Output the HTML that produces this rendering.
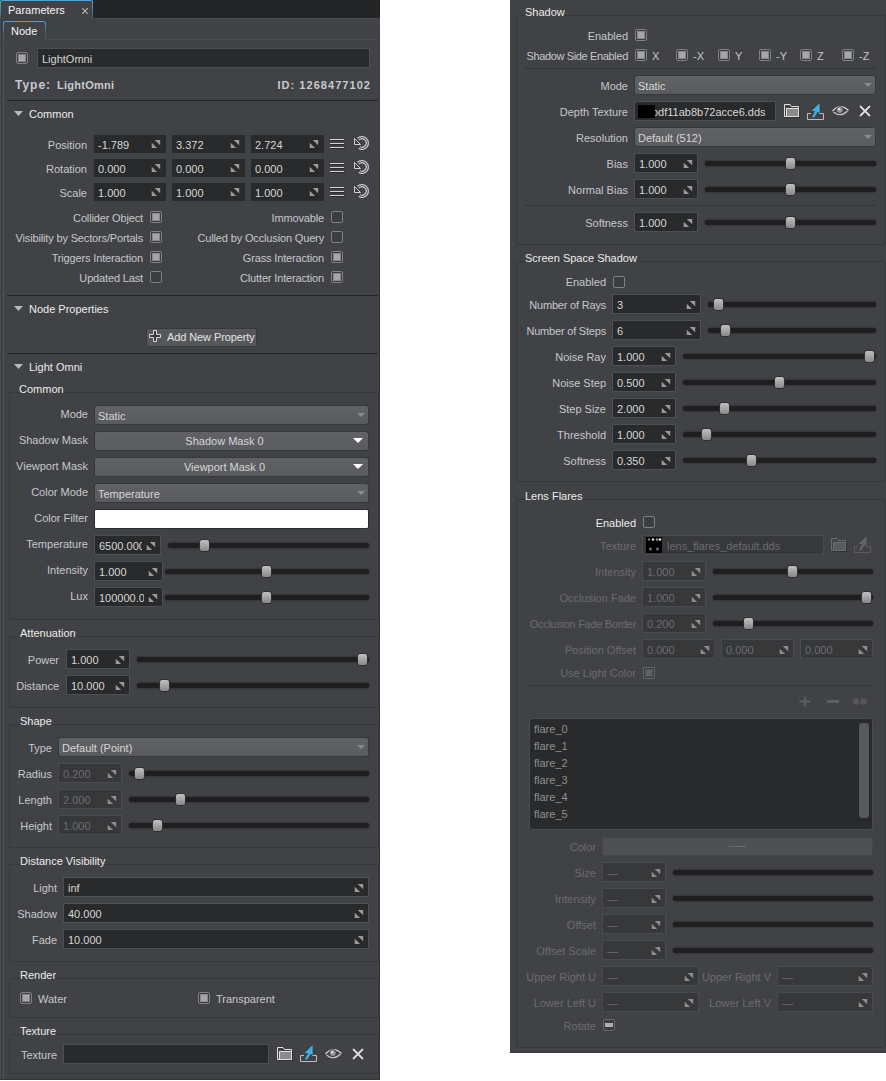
<!DOCTYPE html>
<html><head><meta charset="utf-8"><style>
html,body{margin:0;padding:0;background:#fff;width:886px;height:1081px;overflow:hidden}
.b{position:absolute}
.t{position:absolute;font-family:"Liberation Sans",sans-serif;font-size:11px;line-height:13px;white-space:nowrap}
.r{text-align:right}
svg{display:block}
</style></head><body>
<div class="b" style="left:0px;top:0px;width:380px;height:1080px;background:#414246"></div>
<div class="b" style="left:93px;top:0px;width:287px;height:18px;background:#242526"></div>
<div class="b" style="left:92px;top:18px;width:288px;height:1px;background:#4a4b4f"></div>
<div class="b" style="left:0px;top:18px;width:1px;height:1062px;background:#4b4c50"></div>
<div class="b" style="left:1px;top:18px;width:1px;height:1062px;background:#37383b"></div>
<div class="b" style="left:3px;top:40px;width:1px;height:1040px;background:#505155"></div>
<div class="b" style="left:379px;top:18px;width:1px;height:1062px;background:linear-gradient(rgba(51,52,55,0.2),#333437 25%)"></div>
<div class="b" style="left:0px;top:1079px;width:380px;height:1px;background:#333437"></div>
<div class="b" style="left:0px;top:0px;width:93px;height:20px;background:#414246;border-radius:3px 3px 0 0;border-top:1px solid #4aa6e0"></div>
<div class="b" style="left:0px;top:1px;width:1px;height:18px;background:linear-gradient(#4aa6e0,#45606f)"></div>
<div class="b" style="left:92px;top:1px;width:1px;height:18px;background:linear-gradient(#4aa6e0,#4a5a64)"></div>
<div class="t" style="left:8px;top:4px;color:#f4f4f4;">Parameters</div>
<svg class="b" style="left:82px;top:8px" width="6" height="6"><path d="M0 0L6 6M6 0L0 6" stroke="#b4b4b4" stroke-width="1.2"/></svg>
<div class="b" style="left:3px;top:21px;width:43px;height:20px;background:#414246;border-radius:3px 3px 0 0;border-top:1px solid #4aa6e0"></div>
<div class="b" style="left:3px;top:22px;width:1px;height:18px;background:linear-gradient(#4aa6e0,#466271 60%,#505155)"></div>
<div class="b" style="left:45px;top:22px;width:1px;height:17px;background:linear-gradient(#4aa6e0,#466271 60%,#4c4d51)"></div>
<div class="t" style="left:11px;top:25px;color:#f4f4f4;">Node</div>
<div class="b" style="left:45px;top:39px;width:333px;height:1px;background:#4c4d51"></div>
<div class="b" style="left:16px;top:52px;width:12px;height:12px;border:1px solid #808184;border-radius:2px;box-sizing:border-box;background:#3c3d40"></div>
<div class="b" style="left:18px;top:54px;width:8px;height:8px;background:#a6a6a8;box-shadow:inset 0 0 0 1px #88888a"></div>
<div class="b" style="left:37px;top:48px;width:333px;height:20px;background:#292a2b;border:1px solid #4e4f53;box-sizing:border-box"></div>
<div class="t" style="left:42px;top:53px;color:#d6d6d6;">LightOmni</div>
<div class="t" style="left:15px;top:79px;color:#c8c9cd;font-weight:bold;font-size:12px;letter-spacing:1px">Type:</div>
<div class="t" style="left:57px;top:79px;color:#c8c9cd;font-weight:bold;letter-spacing:0.25px">LightOmni</div>
<div class="t r" style="left:71px;width:300px;top:79px;color:#c8c9cd;font-weight:bold;letter-spacing:1.05px">ID: 1268477102</div>
<div class="b" style="left:7px;top:100px;width:371px;height:1px;background:#242528"></div>
<svg class="b" style="left:14px;top:111px" width="9" height="5"><path d="M0 0H9L4.5 5Z" fill="#b9bac0"/></svg>
<div class="t" style="left:29px;top:108px;color:#ececec;">Common</div>
<div class="t r" style="left:-213px;width:300px;top:139px;color:#c6c7cb;">Position</div>
<div class="b" style="left:94px;top:135px;width:72px;height:18px;background:#292a2b;"></div>
<div class="b" style="left:98px;top:139px;width:48px;height:13px;overflow:hidden"><div class="t" style="left:0;top:0;color:#d6d6d6">-1.789</div></div>
<div class="b" style="left:151px;top:140px"><svg class="dg" width="10" height="9" viewBox="0 0 10 9"><path d="M3.7 0H9.2V5.2Z M0.7 2.8V8.1H6.1Z" fill="#9a9a9a"/></svg></div>
<div class="b" style="left:172px;top:135px;width:73px;height:18px;background:#292a2b;"></div>
<div class="b" style="left:176px;top:139px;width:49px;height:13px;overflow:hidden"><div class="t" style="left:0;top:0;color:#d6d6d6">3.372</div></div>
<div class="b" style="left:230px;top:140px"><svg class="dg" width="10" height="9" viewBox="0 0 10 9"><path d="M3.7 0H9.2V5.2Z M0.7 2.8V8.1H6.1Z" fill="#9a9a9a"/></svg></div>
<div class="b" style="left:251px;top:135px;width:73px;height:18px;background:#292a2b;"></div>
<div class="b" style="left:255px;top:139px;width:49px;height:13px;overflow:hidden"><div class="t" style="left:0;top:0;color:#d6d6d6">2.724</div></div>
<div class="b" style="left:309px;top:140px"><svg class="dg" width="10" height="9" viewBox="0 0 10 9"><path d="M3.7 0H9.2V5.2Z M0.7 2.8V8.1H6.1Z" fill="#9a9a9a"/></svg></div>
<div class="b" style="left:330px;top:139px;width:14px;height:1px;background:#d2d2d2"></div>
<div class="b" style="left:331px;top:140px;width:14px;height:1px;background:#2a2b2e"></div>
<div class="b" style="left:330px;top:143px;width:14px;height:1px;background:#d2d2d2"></div>
<div class="b" style="left:331px;top:144px;width:14px;height:1px;background:#2a2b2e"></div>
<div class="b" style="left:330px;top:147px;width:14px;height:1px;background:#d2d2d2"></div>
<div class="b" style="left:331px;top:148px;width:14px;height:1px;background:#2a2b2e"></div>
<svg class="b" style="left:353px;top:135px" width="18" height="17" viewBox="0 0 18 17"><path d="M5.25 4.25A5.3 5.3 0 1 1 6.35 12.6" fill="none" stroke="#d0d0d0" stroke-width="3.4"/><path d="M5.25 4.25A5.3 5.3 0 1 1 6.35 12.6" fill="none" stroke="#45464a" stroke-width="1.1"/><path d="M1.5 3.5V9.5H7.5Z" fill="#3a3b3e" stroke="#d0d0d0" stroke-width="1"/></svg>
<div class="t r" style="left:-213px;width:300px;top:163px;color:#c6c7cb;">Rotation</div>
<div class="b" style="left:94px;top:159px;width:72px;height:18px;background:#292a2b;"></div>
<div class="b" style="left:98px;top:163px;width:48px;height:13px;overflow:hidden"><div class="t" style="left:0;top:0;color:#d6d6d6">0.000</div></div>
<div class="b" style="left:151px;top:164px"><svg class="dg" width="10" height="9" viewBox="0 0 10 9"><path d="M3.7 0H9.2V5.2Z M0.7 2.8V8.1H6.1Z" fill="#9a9a9a"/></svg></div>
<div class="b" style="left:172px;top:159px;width:73px;height:18px;background:#292a2b;"></div>
<div class="b" style="left:176px;top:163px;width:49px;height:13px;overflow:hidden"><div class="t" style="left:0;top:0;color:#d6d6d6">0.000</div></div>
<div class="b" style="left:230px;top:164px"><svg class="dg" width="10" height="9" viewBox="0 0 10 9"><path d="M3.7 0H9.2V5.2Z M0.7 2.8V8.1H6.1Z" fill="#9a9a9a"/></svg></div>
<div class="b" style="left:251px;top:159px;width:73px;height:18px;background:#292a2b;"></div>
<div class="b" style="left:255px;top:163px;width:49px;height:13px;overflow:hidden"><div class="t" style="left:0;top:0;color:#d6d6d6">0.000</div></div>
<div class="b" style="left:309px;top:164px"><svg class="dg" width="10" height="9" viewBox="0 0 10 9"><path d="M3.7 0H9.2V5.2Z M0.7 2.8V8.1H6.1Z" fill="#9a9a9a"/></svg></div>
<div class="b" style="left:330px;top:163px;width:14px;height:1px;background:#d2d2d2"></div>
<div class="b" style="left:331px;top:164px;width:14px;height:1px;background:#2a2b2e"></div>
<div class="b" style="left:330px;top:167px;width:14px;height:1px;background:#d2d2d2"></div>
<div class="b" style="left:331px;top:168px;width:14px;height:1px;background:#2a2b2e"></div>
<div class="b" style="left:330px;top:171px;width:14px;height:1px;background:#d2d2d2"></div>
<div class="b" style="left:331px;top:172px;width:14px;height:1px;background:#2a2b2e"></div>
<svg class="b" style="left:353px;top:159px" width="18" height="17" viewBox="0 0 18 17"><path d="M5.25 4.25A5.3 5.3 0 1 1 6.35 12.6" fill="none" stroke="#d0d0d0" stroke-width="3.4"/><path d="M5.25 4.25A5.3 5.3 0 1 1 6.35 12.6" fill="none" stroke="#45464a" stroke-width="1.1"/><path d="M1.5 3.5V9.5H7.5Z" fill="#3a3b3e" stroke="#d0d0d0" stroke-width="1"/></svg>
<div class="t r" style="left:-213px;width:300px;top:187px;color:#c6c7cb;">Scale</div>
<div class="b" style="left:94px;top:183px;width:72px;height:18px;background:#292a2b;"></div>
<div class="b" style="left:98px;top:187px;width:48px;height:13px;overflow:hidden"><div class="t" style="left:0;top:0;color:#d6d6d6">1.000</div></div>
<div class="b" style="left:151px;top:188px"><svg class="dg" width="10" height="9" viewBox="0 0 10 9"><path d="M3.7 0H9.2V5.2Z M0.7 2.8V8.1H6.1Z" fill="#9a9a9a"/></svg></div>
<div class="b" style="left:172px;top:183px;width:73px;height:18px;background:#292a2b;"></div>
<div class="b" style="left:176px;top:187px;width:49px;height:13px;overflow:hidden"><div class="t" style="left:0;top:0;color:#d6d6d6">1.000</div></div>
<div class="b" style="left:230px;top:188px"><svg class="dg" width="10" height="9" viewBox="0 0 10 9"><path d="M3.7 0H9.2V5.2Z M0.7 2.8V8.1H6.1Z" fill="#9a9a9a"/></svg></div>
<div class="b" style="left:251px;top:183px;width:73px;height:18px;background:#292a2b;"></div>
<div class="b" style="left:255px;top:187px;width:49px;height:13px;overflow:hidden"><div class="t" style="left:0;top:0;color:#d6d6d6">1.000</div></div>
<div class="b" style="left:309px;top:188px"><svg class="dg" width="10" height="9" viewBox="0 0 10 9"><path d="M3.7 0H9.2V5.2Z M0.7 2.8V8.1H6.1Z" fill="#9a9a9a"/></svg></div>
<div class="b" style="left:330px;top:187px;width:14px;height:1px;background:#d2d2d2"></div>
<div class="b" style="left:331px;top:188px;width:14px;height:1px;background:#2a2b2e"></div>
<div class="b" style="left:330px;top:191px;width:14px;height:1px;background:#d2d2d2"></div>
<div class="b" style="left:331px;top:192px;width:14px;height:1px;background:#2a2b2e"></div>
<div class="b" style="left:330px;top:195px;width:14px;height:1px;background:#d2d2d2"></div>
<div class="b" style="left:331px;top:196px;width:14px;height:1px;background:#2a2b2e"></div>
<svg class="b" style="left:353px;top:183px" width="18" height="17" viewBox="0 0 18 17"><path d="M5.25 4.25A5.3 5.3 0 1 1 6.35 12.6" fill="none" stroke="#d0d0d0" stroke-width="3.4"/><path d="M5.25 4.25A5.3 5.3 0 1 1 6.35 12.6" fill="none" stroke="#45464a" stroke-width="1.1"/><path d="M1.5 3.5V9.5H7.5Z" fill="#3a3b3e" stroke="#d0d0d0" stroke-width="1"/></svg>
<div class="t r" style="left:-157px;width:300px;top:212px;color:#c6c7cb;letter-spacing:-0.15px">Collider Object</div>
<div class="b" style="left:150px;top:211px;width:12px;height:12px;border:1px solid #808184;border-radius:2px;box-sizing:border-box;background:#3c3d40"></div>
<div class="b" style="left:152px;top:213px;width:8px;height:8px;background:#a6a6a8;box-shadow:inset 0 0 0 1px #88888a"></div>
<div class="t r" style="left:24px;width:300px;top:212px;color:#c6c7cb;letter-spacing:-0.15px">Immovable</div>
<div class="b" style="left:331px;top:211px;width:12px;height:12px;border:1px solid #808184;border-radius:2px;box-sizing:border-box;background:#3c3d40"></div>
<div class="t r" style="left:-157px;width:300px;top:232px;color:#c6c7cb;letter-spacing:-0.15px">Visibility by Sectors/Portals</div>
<div class="b" style="left:150px;top:231px;width:12px;height:12px;border:1px solid #808184;border-radius:2px;box-sizing:border-box;background:#3c3d40"></div>
<div class="b" style="left:152px;top:233px;width:8px;height:8px;background:#a6a6a8;box-shadow:inset 0 0 0 1px #88888a"></div>
<div class="t r" style="left:24px;width:300px;top:232px;color:#c6c7cb;letter-spacing:-0.15px">Culled by Occlusion Query</div>
<div class="b" style="left:331px;top:231px;width:12px;height:12px;border:1px solid #808184;border-radius:2px;box-sizing:border-box;background:#3c3d40"></div>
<div class="t r" style="left:-157px;width:300px;top:252px;color:#c6c7cb;letter-spacing:-0.15px">Triggers Interaction</div>
<div class="b" style="left:150px;top:251px;width:12px;height:12px;border:1px solid #808184;border-radius:2px;box-sizing:border-box;background:#3c3d40"></div>
<div class="b" style="left:152px;top:253px;width:8px;height:8px;background:#a6a6a8;box-shadow:inset 0 0 0 1px #88888a"></div>
<div class="t r" style="left:24px;width:300px;top:252px;color:#c6c7cb;letter-spacing:-0.15px">Grass Interaction</div>
<div class="b" style="left:331px;top:251px;width:12px;height:12px;border:1px solid #808184;border-radius:2px;box-sizing:border-box;background:#3c3d40"></div>
<div class="b" style="left:333px;top:253px;width:8px;height:8px;background:#a6a6a8;box-shadow:inset 0 0 0 1px #88888a"></div>
<div class="t r" style="left:-157px;width:300px;top:272px;color:#c6c7cb;letter-spacing:-0.15px">Updated Last</div>
<div class="b" style="left:150px;top:271px;width:12px;height:12px;border:1px solid #808184;border-radius:2px;box-sizing:border-box;background:#3c3d40"></div>
<div class="t r" style="left:24px;width:300px;top:272px;color:#c6c7cb;letter-spacing:-0.15px">Clutter Interaction</div>
<div class="b" style="left:331px;top:271px;width:12px;height:12px;border:1px solid #808184;border-radius:2px;box-sizing:border-box;background:#3c3d40"></div>
<div class="b" style="left:333px;top:273px;width:8px;height:8px;background:#a6a6a8;box-shadow:inset 0 0 0 1px #88888a"></div>
<div class="b" style="left:7px;top:295px;width:371px;height:1px;background:#242528"></div>
<svg class="b" style="left:14px;top:306px" width="9" height="5"><path d="M0 0H9L4.5 5Z" fill="#b9bac0"/></svg>
<div class="t" style="left:29px;top:303px;color:#ececec;">Node Properties</div>
<div class="b" style="left:146px;top:328px;width:111px;height:19px;background:#56575b;border:1px solid #38393c;border-radius:2px;box-sizing:border-box"></div>
<svg class="b" style="left:149px;top:330px" width="12" height="12" viewBox="0 0 12 12"><path d="M4.5 0.5H7.5V4.5H11.5V7.5H7.5V11.5H4.5V7.5H0.5V4.5H4.5Z" fill="#3a3b3e" stroke="#d8d8d8"/></svg>
<div class="t" style="left:167px;top:331px;color:#e4e4e4;letter-spacing:-0.1px">Add New Property</div>
<div class="b" style="left:7px;top:353px;width:371px;height:1px;background:#242528"></div>
<svg class="b" style="left:14px;top:364px" width="9" height="5"><path d="M0 0H9L4.5 5Z" fill="#b9bac0"/></svg>
<div class="t" style="left:29px;top:361px;color:#ececec;">Light Omni</div>
<div class="b" style="left:9px;top:392px;width:370px;height:228px;border:1px solid #37383a;border-radius:2px;box-sizing:border-box"></div>
<div class="t" style="left:19px;top:383px;color:#ececec;">Common</div>
<div class="b" style="left:94px;top:405px;width:275px;height:20px;background:linear-gradient(#616266,#5a5b5f);border-radius:3px;border:1px solid #37383b;box-sizing:border-box"></div>
<div class="t" style="left:98px;top:410px;color:#d6d6d6;">Static</div>
<svg class="b" style="left:357px;top:413px" width="8" height="5"><path d="M0 0H8L4 4Z" fill="#8a8b8e"/></svg>
<div class="t r" style="left:-212px;width:300px;top:408px;color:#c6c7cb;">Mode</div>
<div class="b" style="left:94px;top:431px;width:275px;height:20px;background:linear-gradient(#616266,#5a5b5f);border-radius:3px;border:1px solid #37383b;box-sizing:border-box"></div>
<div class="t" style="left:95px;width:259px;text-align:center;top:435px;color:#d6d6d6">Shadow Mask 0</div>
<svg class="b" style="left:353px;top:438px" width="10" height="6"><path d="M0 0H10L5 5Z" fill="#ffffff"/></svg>
<div class="t r" style="left:-212px;width:300px;top:434px;color:#c6c7cb;">Shadow Mask</div>
<div class="b" style="left:94px;top:457px;width:275px;height:20px;background:linear-gradient(#616266,#5a5b5f);border-radius:3px;border:1px solid #37383b;box-sizing:border-box"></div>
<div class="t" style="left:95px;width:259px;text-align:center;top:461px;color:#d6d6d6">Viewport Mask 0</div>
<svg class="b" style="left:353px;top:464px" width="10" height="6"><path d="M0 0H10L5 5Z" fill="#ffffff"/></svg>
<div class="t r" style="left:-212px;width:300px;top:460px;color:#c6c7cb;">Viewport Mask</div>
<div class="b" style="left:94px;top:483px;width:275px;height:20px;background:linear-gradient(#616266,#5a5b5f);border-radius:3px;border:1px solid #37383b;box-sizing:border-box"></div>
<div class="t" style="left:98px;top:488px;color:#d6d6d6;">Temperature</div>
<svg class="b" style="left:357px;top:491px" width="8" height="5"><path d="M0 0H8L4 4Z" fill="#8a8b8e"/></svg>
<div class="t r" style="left:-212px;width:300px;top:486px;color:#c6c7cb;">Color Mode</div>
<div class="b" style="left:94px;top:509px;width:275px;height:20px;background:#ffffff;border:1px solid #2b2c2f;border-radius:2px;box-sizing:border-box"></div>
<div class="t r" style="left:-212px;width:300px;top:512px;color:#c6c7cb;">Color Filter</div>
<div class="b" style="left:94px;top:535px;width:67px;height:20px;background:#292a2b;border:1px solid #4e4f53;box-sizing:border-box;"></div>
<div class="b" style="left:99px;top:540px;width:43px;height:13px;overflow:hidden"><div class="t" style="left:0;top:0;color:#d6d6d6">6500.000</div></div>
<div class="b" style="left:146px;top:542px"><svg class="dg" width="10" height="9" viewBox="0 0 10 9"><path d="M3.7 0H9.2V5.2Z M0.7 2.8V8.1H6.1Z" fill="#9a9a9a"/></svg></div>
<div class="t r" style="left:-212px;width:300px;top:538px;color:#c6c7cb;">Temperature</div>
<div class="b" style="left:168px;top:543px;width:201px;height:5px;background:#1f1f20;border-radius:3px;box-shadow:0 0 1px 0.5px rgba(30,30,32,0.6)"></div>
<div class="b" style="left:199px;top:539px;width:11px;height:13px;background:linear-gradient(#c0c0c0,#888888);border:1px solid #2e2f32;border-radius:3px;box-sizing:border-box"></div>
<div class="b" style="left:94px;top:561px;width:69px;height:20px;background:#292a2b;border:1px solid #4e4f53;box-sizing:border-box;"></div>
<div class="b" style="left:99px;top:566px;width:45px;height:13px;overflow:hidden"><div class="t" style="left:0;top:0;color:#d6d6d6">1.000</div></div>
<div class="b" style="left:148px;top:568px"><svg class="dg" width="10" height="9" viewBox="0 0 10 9"><path d="M3.7 0H9.2V5.2Z M0.7 2.8V8.1H6.1Z" fill="#9a9a9a"/></svg></div>
<div class="t r" style="left:-212px;width:300px;top:564px;color:#c6c7cb;">Intensity</div>
<div class="b" style="left:165px;top:569px;width:204px;height:5px;background:#1f1f20;border-radius:3px;box-shadow:0 0 1px 0.5px rgba(30,30,32,0.6)"></div>
<div class="b" style="left:261px;top:565px;width:11px;height:13px;background:linear-gradient(#c0c0c0,#888888);border:1px solid #2e2f32;border-radius:3px;box-sizing:border-box"></div>
<div class="b" style="left:94px;top:587px;width:69px;height:20px;background:#292a2b;border:1px solid #4e4f53;box-sizing:border-box;"></div>
<div class="b" style="left:99px;top:592px;width:45px;height:13px;overflow:hidden"><div class="t" style="left:0;top:0;color:#d6d6d6">100000.0</div></div>
<div class="b" style="left:148px;top:594px"><svg class="dg" width="10" height="9" viewBox="0 0 10 9"><path d="M3.7 0H9.2V5.2Z M0.7 2.8V8.1H6.1Z" fill="#9a9a9a"/></svg></div>
<div class="t r" style="left:-212px;width:300px;top:590px;color:#c6c7cb;">Lux</div>
<div class="b" style="left:165px;top:595px;width:204px;height:5px;background:#1f1f20;border-radius:3px;box-shadow:0 0 1px 0.5px rgba(30,30,32,0.6)"></div>
<div class="b" style="left:261px;top:591px;width:11px;height:13px;background:linear-gradient(#c0c0c0,#888888);border:1px solid #2e2f32;border-radius:3px;box-sizing:border-box"></div>
<div class="b" style="left:9px;top:636px;width:370px;height:72px;border:1px solid #37383a;border-radius:2px;box-sizing:border-box"></div>
<div class="t" style="left:20px;top:627px;color:#ececec;">Attenuation</div>
<div class="b" style="left:66px;top:649px;width:64px;height:20px;background:#292a2b;border:1px solid #4e4f53;box-sizing:border-box;"></div>
<div class="b" style="left:71px;top:654px;width:40px;height:13px;overflow:hidden"><div class="t" style="left:0;top:0;color:#d6d6d6">1.000</div></div>
<div class="b" style="left:115px;top:656px"><svg class="dg" width="10" height="9" viewBox="0 0 10 9"><path d="M3.7 0H9.2V5.2Z M0.7 2.8V8.1H6.1Z" fill="#9a9a9a"/></svg></div>
<div class="t r" style="left:-241px;width:300px;top:654px;color:#c6c7cb;">Power</div>
<div class="b" style="left:137px;top:657px;width:232px;height:5px;background:#1f1f20;border-radius:3px;box-shadow:0 0 1px 0.5px rgba(30,30,32,0.6)"></div>
<div class="b" style="left:357px;top:653px;width:11px;height:13px;background:linear-gradient(#c0c0c0,#888888);border:1px solid #2e2f32;border-radius:3px;box-sizing:border-box"></div>
<div class="b" style="left:66px;top:675px;width:64px;height:20px;background:#292a2b;border:1px solid #4e4f53;box-sizing:border-box;"></div>
<div class="b" style="left:71px;top:680px;width:40px;height:13px;overflow:hidden"><div class="t" style="left:0;top:0;color:#d6d6d6">10.000</div></div>
<div class="b" style="left:115px;top:682px"><svg class="dg" width="10" height="9" viewBox="0 0 10 9"><path d="M3.7 0H9.2V5.2Z M0.7 2.8V8.1H6.1Z" fill="#9a9a9a"/></svg></div>
<div class="t r" style="left:-241px;width:300px;top:680px;color:#c6c7cb;">Distance</div>
<div class="b" style="left:137px;top:683px;width:232px;height:5px;background:#1f1f20;border-radius:3px;box-shadow:0 0 1px 0.5px rgba(30,30,32,0.6)"></div>
<div class="b" style="left:159px;top:679px;width:11px;height:13px;background:linear-gradient(#c0c0c0,#888888);border:1px solid #2e2f32;border-radius:3px;box-sizing:border-box"></div>
<div class="b" style="left:9px;top:724px;width:370px;height:124px;border:1px solid #37383a;border-radius:2px;box-sizing:border-box"></div>
<div class="t" style="left:20px;top:715px;color:#ececec;">Shape</div>
<div class="b" style="left:58px;top:737px;width:311px;height:20px;background:linear-gradient(#616266,#5a5b5f);border-radius:3px;border:1px solid #37383b;box-sizing:border-box"></div>
<div class="t" style="left:62px;top:742px;color:#d6d6d6;">Default (Point)</div>
<svg class="b" style="left:357px;top:745px" width="8" height="5"><path d="M0 0H8L4 4Z" fill="#8a8b8e"/></svg>
<div class="t r" style="left:-248px;width:300px;top:742px;color:#c6c7cb;">Type</div>
<div class="b" style="left:58px;top:763px;width:64px;height:20px;background:#37383a;border:1px solid #4a4b4f;box-sizing:border-box;"></div>
<div class="b" style="left:63px;top:768px;width:40px;height:13px;overflow:hidden"><div class="t" style="left:0;top:0;color:#6b6c70">0.200</div></div>
<div class="b" style="left:107px;top:770px"><svg class="dg" width="10" height="9" viewBox="0 0 10 9"><path d="M3.7 0H9.2V5.2Z M0.7 2.8V8.1H6.1Z" fill="#8e8e8e"/></svg></div>
<div class="t r" style="left:-248px;width:300px;top:768px;color:#c6c7cb;">Radius</div>
<div class="b" style="left:129px;top:771px;width:240px;height:5px;background:#1f1f20;border-radius:3px;box-shadow:0 0 1px 0.5px rgba(30,30,32,0.6)"></div>
<div class="b" style="left:134px;top:767px;width:11px;height:13px;background:linear-gradient(#c0c0c0,#888888);border:1px solid #2e2f32;border-radius:3px;box-sizing:border-box"></div>
<div class="b" style="left:58px;top:789px;width:64px;height:20px;background:#37383a;border:1px solid #4a4b4f;box-sizing:border-box;"></div>
<div class="b" style="left:63px;top:794px;width:40px;height:13px;overflow:hidden"><div class="t" style="left:0;top:0;color:#6b6c70">2.000</div></div>
<div class="b" style="left:107px;top:796px"><svg class="dg" width="10" height="9" viewBox="0 0 10 9"><path d="M3.7 0H9.2V5.2Z M0.7 2.8V8.1H6.1Z" fill="#8e8e8e"/></svg></div>
<div class="t r" style="left:-248px;width:300px;top:794px;color:#c6c7cb;">Length</div>
<div class="b" style="left:129px;top:797px;width:240px;height:5px;background:#1f1f20;border-radius:3px;box-shadow:0 0 1px 0.5px rgba(30,30,32,0.6)"></div>
<div class="b" style="left:175px;top:793px;width:11px;height:13px;background:linear-gradient(#c0c0c0,#888888);border:1px solid #2e2f32;border-radius:3px;box-sizing:border-box"></div>
<div class="b" style="left:58px;top:815px;width:64px;height:20px;background:#37383a;border:1px solid #4a4b4f;box-sizing:border-box;"></div>
<div class="b" style="left:63px;top:820px;width:40px;height:13px;overflow:hidden"><div class="t" style="left:0;top:0;color:#6b6c70">1.000</div></div>
<div class="b" style="left:107px;top:822px"><svg class="dg" width="10" height="9" viewBox="0 0 10 9"><path d="M3.7 0H9.2V5.2Z M0.7 2.8V8.1H6.1Z" fill="#8e8e8e"/></svg></div>
<div class="t r" style="left:-248px;width:300px;top:820px;color:#c6c7cb;">Height</div>
<div class="b" style="left:129px;top:823px;width:240px;height:5px;background:#1f1f20;border-radius:3px;box-shadow:0 0 1px 0.5px rgba(30,30,32,0.6)"></div>
<div class="b" style="left:152px;top:819px;width:11px;height:13px;background:linear-gradient(#c0c0c0,#888888);border:1px solid #2e2f32;border-radius:3px;box-sizing:border-box"></div>
<div class="b" style="left:9px;top:864px;width:370px;height:98px;border:1px solid #37383a;border-radius:2px;box-sizing:border-box"></div>
<div class="t" style="left:20px;top:855px;color:#ececec;">Distance Visibility</div>
<div class="b" style="left:63px;top:877px;width:306px;height:20px;background:#292a2b;border:1px solid #4e4f53;box-sizing:border-box;"></div>
<div class="b" style="left:68px;top:882px;width:282px;height:13px;overflow:hidden"><div class="t" style="left:0;top:0;color:#d6d6d6">inf</div></div>
<div class="b" style="left:354px;top:884px"><svg class="dg" width="10" height="9" viewBox="0 0 10 9"><path d="M3.7 0H9.2V5.2Z M0.7 2.8V8.1H6.1Z" fill="#9a9a9a"/></svg></div>
<div class="t r" style="left:-243px;width:300px;top:882px;color:#c6c7cb;">Light</div>
<div class="b" style="left:63px;top:903px;width:306px;height:20px;background:#292a2b;border:1px solid #4e4f53;box-sizing:border-box;"></div>
<div class="b" style="left:68px;top:908px;width:282px;height:13px;overflow:hidden"><div class="t" style="left:0;top:0;color:#d6d6d6">40.000</div></div>
<div class="b" style="left:354px;top:910px"><svg class="dg" width="10" height="9" viewBox="0 0 10 9"><path d="M3.7 0H9.2V5.2Z M0.7 2.8V8.1H6.1Z" fill="#9a9a9a"/></svg></div>
<div class="t r" style="left:-243px;width:300px;top:908px;color:#c6c7cb;">Shadow</div>
<div class="b" style="left:63px;top:929px;width:306px;height:20px;background:#292a2b;border:1px solid #4e4f53;box-sizing:border-box;"></div>
<div class="b" style="left:68px;top:934px;width:282px;height:13px;overflow:hidden"><div class="t" style="left:0;top:0;color:#d6d6d6">10.000</div></div>
<div class="b" style="left:354px;top:936px"><svg class="dg" width="10" height="9" viewBox="0 0 10 9"><path d="M3.7 0H9.2V5.2Z M0.7 2.8V8.1H6.1Z" fill="#9a9a9a"/></svg></div>
<div class="t r" style="left:-243px;width:300px;top:934px;color:#c6c7cb;">Fade</div>
<div class="b" style="left:9px;top:978px;width:370px;height:40px;border:1px solid #37383a;border-radius:2px;box-sizing:border-box"></div>
<div class="t" style="left:20px;top:969px;color:#ececec;">Render</div>
<div class="b" style="left:20px;top:992px;width:12px;height:12px;border:1px solid #808184;border-radius:2px;box-sizing:border-box;background:#3c3d40"></div>
<div class="b" style="left:22px;top:994px;width:8px;height:8px;background:#a6a6a8;box-shadow:inset 0 0 0 1px #88888a"></div>
<div class="t" style="left:38px;top:993px;color:#c6c7cb;">Water</div>
<div class="b" style="left:198px;top:992px;width:12px;height:12px;border:1px solid #808184;border-radius:2px;box-sizing:border-box;background:#3c3d40"></div>
<div class="b" style="left:200px;top:994px;width:8px;height:8px;background:#a6a6a8;box-shadow:inset 0 0 0 1px #88888a"></div>
<div class="t" style="left:216px;top:993px;color:#c6c7cb;">Transparent</div>
<div class="b" style="left:9px;top:1034px;width:370px;height:40px;border:1px solid #37383a;border-radius:2px;box-sizing:border-box"></div>
<div class="t" style="left:20px;top:1025px;color:#ececec;">Texture</div>
<div class="b" style="left:63px;top:1044px;width:206px;height:20px;background:#292a2b;border:1px solid #4e4f53;box-sizing:border-box"></div>
<div class="t r" style="left:-243px;width:300px;top:1049px;color:#c6c7cb;">Texture</div>
<svg class="b" style="left:277px;top:1047px" width="17" height="15" viewBox="0 0 17 15"><path d="M0.5 12.5V0.5H6L7.5 2.5H14.5V12.5Z" fill="none" stroke="#e0e0e0"/><rect x="2.5" y="4.5" width="12" height="8" fill="#8a8a8a" stroke="#e0e0e0"/><path d="M1 13.5H15.5V3" fill="none" stroke="#2a2b2e" stroke-opacity="0.7"/></svg>
<svg class="b" style="left:300px;top:1045px" width="17" height="17" viewBox="0 0 17 17"><path d="M4 10.5H0.5V16.5H16.5V10.5H12.5" fill="none" stroke="#bdbdbd"/><path d="M12.6 0.3L12.6 10.2L10.6 8.8L7.2 14.6L5 14.2L8.3 8L4.6 8Z" fill="#3db2ea"/></svg>
<svg class="b" style="left:325px;top:1048px" width="17" height="11" viewBox="0 0 17 11"><path d="M0.5 6Q8 -2.5 16.5 5.5" fill="none" stroke="#d4d4d4" stroke-width="1.3"/><path d="M1.5 7Q8.5 13 15.5 6" fill="none" stroke="#c8c8c8" stroke-width="1.1"/><circle cx="7.8" cy="5" r="3.4" fill="#9c9c9c" stroke="#2e2f32" stroke-width="0.7"/><circle cx="7" cy="4" r="1.1" fill="#e8e8e8"/></svg>
<svg class="b" style="left:352px;top:1048px" width="12" height="12" viewBox="0 0 12 12"><path d="M1 1L11 11M11 1L1 11" stroke="#1e1f22" stroke-opacity="0.6" stroke-width="2.8"/><path d="M1 1L11 11M11 1L1 11" stroke="#dcdcdc" stroke-width="2"/></svg>
<div class="b" style="left:510px;top:0px;width:376px;height:1053px;background:#414246"></div>
<div class="b" style="left:510px;top:1052px;width:376px;height:1px;background:#38393c"></div>
<div class="b" style="left:516px;top:15px;width:370px;height:230px;border:1px solid #37383a;border-radius:2px;box-sizing:border-box"></div>
<div class="t" style="left:525px;top:6px;color:#ececec;">Shadow</div>
<div class="t r" style="left:328px;width:300px;top:30px;color:#c6c7cb;">Enabled</div>
<div class="b" style="left:635px;top:29px;width:12px;height:12px;border:1px solid #808184;border-radius:2px;box-sizing:border-box;background:#3c3d40"></div>
<div class="b" style="left:637px;top:31px;width:8px;height:8px;background:#a6a6a8;box-shadow:inset 0 0 0 1px #88888a"></div>
<div class="t r" style="left:328px;width:300px;top:50px;color:#c6c7cb;letter-spacing:-0.35px">Shadow Side Enabled</div>
<div class="b" style="left:635px;top:49px;width:12px;height:12px;border:1px solid #808184;border-radius:2px;box-sizing:border-box;background:#3c3d40"></div>
<div class="b" style="left:637px;top:51px;width:8px;height:8px;background:#a6a6a8;box-shadow:inset 0 0 0 1px #88888a"></div>
<div class="t" style="left:652px;top:50px;color:#c6c7cb;">X</div>
<div class="b" style="left:676px;top:49px;width:12px;height:12px;border:1px solid #808184;border-radius:2px;box-sizing:border-box;background:#3c3d40"></div>
<div class="b" style="left:678px;top:51px;width:8px;height:8px;background:#a6a6a8;box-shadow:inset 0 0 0 1px #88888a"></div>
<div class="t" style="left:693px;top:50px;color:#c6c7cb;">-X</div>
<div class="b" style="left:718px;top:49px;width:12px;height:12px;border:1px solid #808184;border-radius:2px;box-sizing:border-box;background:#3c3d40"></div>
<div class="b" style="left:720px;top:51px;width:8px;height:8px;background:#a6a6a8;box-shadow:inset 0 0 0 1px #88888a"></div>
<div class="t" style="left:735px;top:50px;color:#c6c7cb;">Y</div>
<div class="b" style="left:759px;top:49px;width:12px;height:12px;border:1px solid #808184;border-radius:2px;box-sizing:border-box;background:#3c3d40"></div>
<div class="b" style="left:761px;top:51px;width:8px;height:8px;background:#a6a6a8;box-shadow:inset 0 0 0 1px #88888a"></div>
<div class="t" style="left:776px;top:50px;color:#c6c7cb;">-Y</div>
<div class="b" style="left:800px;top:49px;width:12px;height:12px;border:1px solid #808184;border-radius:2px;box-sizing:border-box;background:#3c3d40"></div>
<div class="b" style="left:802px;top:51px;width:8px;height:8px;background:#a6a6a8;box-shadow:inset 0 0 0 1px #88888a"></div>
<div class="t" style="left:817px;top:50px;color:#c6c7cb;">Z</div>
<div class="b" style="left:842px;top:49px;width:12px;height:12px;border:1px solid #808184;border-radius:2px;box-sizing:border-box;background:#3c3d40"></div>
<div class="b" style="left:844px;top:51px;width:8px;height:8px;background:#a6a6a8;box-shadow:inset 0 0 0 1px #88888a"></div>
<div class="t" style="left:859px;top:50px;color:#c6c7cb;">-Z</div>
<div class="b" style="left:525px;top:68px;width:351px;height:1px;background:#333437"></div>
<div class="b" style="left:634px;top:75px;width:242px;height:20px;background:linear-gradient(#616266,#5a5b5f);border-radius:3px;border:1px solid #37383b;box-sizing:border-box"></div>
<div class="t" style="left:638px;top:80px;color:#d6d6d6;">Static</div>
<svg class="b" style="left:864px;top:83px" width="8" height="5"><path d="M0 0H8L4 4Z" fill="#8a8b8e"/></svg>
<div class="t r" style="left:328px;width:300px;top:80px;color:#c6c7cb;">Mode</div>
<div class="b" style="left:634px;top:101px;width:142px;height:20px;background:#292a2b;border:1px solid #4e4f53;box-sizing:border-box"></div>
<div class="t r" style="left:328px;width:300px;top:106px;color:#c6c7cb;">Depth Texture</div>
<div class="b" style="left:638px;top:105px;width:17px;height:13px;background:#000"></div>
<div class="b" style="left:655px;top:101px;width:118px;height:19px;overflow:hidden"><div class="t" style="left:-3px;top:5px;color:#d6d6d6">odf11ab8b72acce6.dds</div></div>
<svg class="b" style="left:784px;top:104px" width="17" height="15" viewBox="0 0 17 15"><path d="M0.5 12.5V0.5H6L7.5 2.5H14.5V12.5Z" fill="none" stroke="#e0e0e0"/><rect x="2.5" y="4.5" width="12" height="8" fill="#8a8a8a" stroke="#e0e0e0"/><path d="M1 13.5H15.5V3" fill="none" stroke="#2a2b2e" stroke-opacity="0.7"/></svg>
<svg class="b" style="left:807px;top:103px" width="17" height="17" viewBox="0 0 17 17"><path d="M4 10.5H0.5V16.5H16.5V10.5H12.5" fill="none" stroke="#bdbdbd"/><path d="M12.6 0.3L12.6 10.2L10.6 8.8L7.2 14.6L5 14.2L8.3 8L4.6 8Z" fill="#3db2ea"/></svg>
<svg class="b" style="left:832px;top:105px" width="17" height="11" viewBox="0 0 17 11"><path d="M0.5 6Q8 -2.5 16.5 5.5" fill="none" stroke="#d4d4d4" stroke-width="1.3"/><path d="M1.5 7Q8.5 13 15.5 6" fill="none" stroke="#c8c8c8" stroke-width="1.1"/><circle cx="7.8" cy="5" r="3.4" fill="#9c9c9c" stroke="#2e2f32" stroke-width="0.7"/><circle cx="7" cy="4" r="1.1" fill="#e8e8e8"/></svg>
<svg class="b" style="left:859px;top:105px" width="12" height="12" viewBox="0 0 12 12"><path d="M1 1L11 11M11 1L1 11" stroke="#1e1f22" stroke-opacity="0.6" stroke-width="2.8"/><path d="M1 1L11 11M11 1L1 11" stroke="#dcdcdc" stroke-width="2"/></svg>
<div class="b" style="left:634px;top:127px;width:242px;height:20px;background:linear-gradient(#616266,#5a5b5f);border-radius:3px;border:1px solid #37383b;box-sizing:border-box"></div>
<div class="t" style="left:638px;top:132px;color:#d6d6d6;">Default (512)</div>
<svg class="b" style="left:864px;top:135px" width="8" height="5"><path d="M0 0H8L4 4Z" fill="#8a8b8e"/></svg>
<div class="t r" style="left:328px;width:300px;top:132px;color:#c6c7cb;">Resolution</div>
<div class="b" style="left:634px;top:153px;width:64px;height:20px;background:#292a2b;border:1px solid #4e4f53;box-sizing:border-box;"></div>
<div class="b" style="left:639px;top:158px;width:40px;height:13px;overflow:hidden"><div class="t" style="left:0;top:0;color:#d6d6d6">1.000</div></div>
<div class="b" style="left:683px;top:160px"><svg class="dg" width="10" height="9" viewBox="0 0 10 9"><path d="M3.7 0H9.2V5.2Z M0.7 2.8V8.1H6.1Z" fill="#9a9a9a"/></svg></div>
<div class="t r" style="left:328px;width:300px;top:158px;color:#c6c7cb;">Bias</div>
<div class="b" style="left:705px;top:161px;width:171px;height:5px;background:#1f1f20;border-radius:3px;box-shadow:0 0 1px 0.5px rgba(30,30,32,0.6)"></div>
<div class="b" style="left:785px;top:157px;width:11px;height:13px;background:linear-gradient(#c0c0c0,#888888);border:1px solid #2e2f32;border-radius:3px;box-sizing:border-box"></div>
<div class="b" style="left:634px;top:179px;width:64px;height:20px;background:#292a2b;border:1px solid #4e4f53;box-sizing:border-box;"></div>
<div class="b" style="left:639px;top:184px;width:40px;height:13px;overflow:hidden"><div class="t" style="left:0;top:0;color:#d6d6d6">1.000</div></div>
<div class="b" style="left:683px;top:186px"><svg class="dg" width="10" height="9" viewBox="0 0 10 9"><path d="M3.7 0H9.2V5.2Z M0.7 2.8V8.1H6.1Z" fill="#9a9a9a"/></svg></div>
<div class="t r" style="left:328px;width:300px;top:184px;color:#c6c7cb;">Normal Bias</div>
<div class="b" style="left:705px;top:187px;width:171px;height:5px;background:#1f1f20;border-radius:3px;box-shadow:0 0 1px 0.5px rgba(30,30,32,0.6)"></div>
<div class="b" style="left:785px;top:183px;width:11px;height:13px;background:linear-gradient(#c0c0c0,#888888);border:1px solid #2e2f32;border-radius:3px;box-sizing:border-box"></div>
<div class="b" style="left:525px;top:205px;width:351px;height:1px;background:#333437"></div>
<div class="b" style="left:634px;top:212px;width:64px;height:20px;background:#292a2b;border:1px solid #4e4f53;box-sizing:border-box;"></div>
<div class="b" style="left:639px;top:217px;width:40px;height:13px;overflow:hidden"><div class="t" style="left:0;top:0;color:#d6d6d6">1.000</div></div>
<div class="b" style="left:683px;top:219px"><svg class="dg" width="10" height="9" viewBox="0 0 10 9"><path d="M3.7 0H9.2V5.2Z M0.7 2.8V8.1H6.1Z" fill="#9a9a9a"/></svg></div>
<div class="t r" style="left:328px;width:300px;top:217px;color:#c6c7cb;">Softness</div>
<div class="b" style="left:705px;top:220px;width:171px;height:5px;background:#1f1f20;border-radius:3px;box-shadow:0 0 1px 0.5px rgba(30,30,32,0.6)"></div>
<div class="b" style="left:785px;top:216px;width:11px;height:13px;background:linear-gradient(#c0c0c0,#888888);border:1px solid #2e2f32;border-radius:3px;box-sizing:border-box"></div>
<div class="b" style="left:516px;top:261px;width:370px;height:221px;border:1px solid #37383a;border-radius:2px;box-sizing:border-box"></div>
<div class="t" style="left:525px;top:252px;color:#ececec;">Screen Space Shadow</div>
<div class="t r" style="left:306px;width:300px;top:276px;color:#c6c7cb;">Enabled</div>
<div class="b" style="left:613px;top:276px;width:12px;height:12px;border:1px solid #808184;border-radius:2px;box-sizing:border-box;background:#3c3d40"></div>
<div class="b" style="left:612px;top:294px;width:89px;height:20px;background:#292a2b;border:1px solid #4e4f53;box-sizing:border-box;"></div>
<div class="b" style="left:617px;top:299px;width:65px;height:13px;overflow:hidden"><div class="t" style="left:0;top:0;color:#d6d6d6">3</div></div>
<div class="b" style="left:686px;top:301px"><svg class="dg" width="10" height="9" viewBox="0 0 10 9"><path d="M3.7 0H9.2V5.2Z M0.7 2.8V8.1H6.1Z" fill="#9a9a9a"/></svg></div>
<div class="t r" style="left:306px;width:300px;top:299px;color:#c6c7cb;letter-spacing:-0.2px">Number of Rays</div>
<div class="b" style="left:708px;top:302px;width:168px;height:5px;background:#1f1f20;border-radius:3px;box-shadow:0 0 1px 0.5px rgba(30,30,32,0.6)"></div>
<div class="b" style="left:713px;top:298px;width:11px;height:13px;background:linear-gradient(#c0c0c0,#888888);border:1px solid #2e2f32;border-radius:3px;box-sizing:border-box"></div>
<div class="b" style="left:612px;top:320px;width:89px;height:20px;background:#292a2b;border:1px solid #4e4f53;box-sizing:border-box;"></div>
<div class="b" style="left:617px;top:325px;width:65px;height:13px;overflow:hidden"><div class="t" style="left:0;top:0;color:#d6d6d6">6</div></div>
<div class="b" style="left:686px;top:327px"><svg class="dg" width="10" height="9" viewBox="0 0 10 9"><path d="M3.7 0H9.2V5.2Z M0.7 2.8V8.1H6.1Z" fill="#9a9a9a"/></svg></div>
<div class="t r" style="left:306px;width:300px;top:325px;color:#c6c7cb;letter-spacing:-0.2px">Number of Steps</div>
<div class="b" style="left:708px;top:328px;width:168px;height:5px;background:#1f1f20;border-radius:3px;box-shadow:0 0 1px 0.5px rgba(30,30,32,0.6)"></div>
<div class="b" style="left:720px;top:324px;width:11px;height:13px;background:linear-gradient(#c0c0c0,#888888);border:1px solid #2e2f32;border-radius:3px;box-sizing:border-box"></div>
<div class="b" style="left:612px;top:346px;width:64px;height:20px;background:#292a2b;border:1px solid #4e4f53;box-sizing:border-box;"></div>
<div class="b" style="left:617px;top:351px;width:40px;height:13px;overflow:hidden"><div class="t" style="left:0;top:0;color:#d6d6d6">1.000</div></div>
<div class="b" style="left:661px;top:353px"><svg class="dg" width="10" height="9" viewBox="0 0 10 9"><path d="M3.7 0H9.2V5.2Z M0.7 2.8V8.1H6.1Z" fill="#9a9a9a"/></svg></div>
<div class="t r" style="left:306px;width:300px;top:351px;color:#c6c7cb;">Noise Ray</div>
<div class="b" style="left:683px;top:354px;width:193px;height:5px;background:#1f1f20;border-radius:3px;box-shadow:0 0 1px 0.5px rgba(30,30,32,0.6)"></div>
<div class="b" style="left:864px;top:350px;width:11px;height:13px;background:linear-gradient(#c0c0c0,#888888);border:1px solid #2e2f32;border-radius:3px;box-sizing:border-box"></div>
<div class="b" style="left:612px;top:372px;width:64px;height:20px;background:#292a2b;border:1px solid #4e4f53;box-sizing:border-box;"></div>
<div class="b" style="left:617px;top:377px;width:40px;height:13px;overflow:hidden"><div class="t" style="left:0;top:0;color:#d6d6d6">0.500</div></div>
<div class="b" style="left:661px;top:379px"><svg class="dg" width="10" height="9" viewBox="0 0 10 9"><path d="M3.7 0H9.2V5.2Z M0.7 2.8V8.1H6.1Z" fill="#9a9a9a"/></svg></div>
<div class="t r" style="left:306px;width:300px;top:377px;color:#c6c7cb;">Noise Step</div>
<div class="b" style="left:683px;top:380px;width:193px;height:5px;background:#1f1f20;border-radius:3px;box-shadow:0 0 1px 0.5px rgba(30,30,32,0.6)"></div>
<div class="b" style="left:774px;top:376px;width:11px;height:13px;background:linear-gradient(#c0c0c0,#888888);border:1px solid #2e2f32;border-radius:3px;box-sizing:border-box"></div>
<div class="b" style="left:612px;top:398px;width:64px;height:20px;background:#292a2b;border:1px solid #4e4f53;box-sizing:border-box;"></div>
<div class="b" style="left:617px;top:403px;width:40px;height:13px;overflow:hidden"><div class="t" style="left:0;top:0;color:#d6d6d6">2.000</div></div>
<div class="b" style="left:661px;top:405px"><svg class="dg" width="10" height="9" viewBox="0 0 10 9"><path d="M3.7 0H9.2V5.2Z M0.7 2.8V8.1H6.1Z" fill="#9a9a9a"/></svg></div>
<div class="t r" style="left:306px;width:300px;top:403px;color:#c6c7cb;">Step Size</div>
<div class="b" style="left:683px;top:406px;width:193px;height:5px;background:#1f1f20;border-radius:3px;box-shadow:0 0 1px 0.5px rgba(30,30,32,0.6)"></div>
<div class="b" style="left:719px;top:402px;width:11px;height:13px;background:linear-gradient(#c0c0c0,#888888);border:1px solid #2e2f32;border-radius:3px;box-sizing:border-box"></div>
<div class="b" style="left:612px;top:424px;width:64px;height:20px;background:#292a2b;border:1px solid #4e4f53;box-sizing:border-box;"></div>
<div class="b" style="left:617px;top:429px;width:40px;height:13px;overflow:hidden"><div class="t" style="left:0;top:0;color:#d6d6d6">1.000</div></div>
<div class="b" style="left:661px;top:431px"><svg class="dg" width="10" height="9" viewBox="0 0 10 9"><path d="M3.7 0H9.2V5.2Z M0.7 2.8V8.1H6.1Z" fill="#9a9a9a"/></svg></div>
<div class="t r" style="left:306px;width:300px;top:429px;color:#c6c7cb;">Threshold</div>
<div class="b" style="left:683px;top:432px;width:193px;height:5px;background:#1f1f20;border-radius:3px;box-shadow:0 0 1px 0.5px rgba(30,30,32,0.6)"></div>
<div class="b" style="left:701px;top:428px;width:11px;height:13px;background:linear-gradient(#c0c0c0,#888888);border:1px solid #2e2f32;border-radius:3px;box-sizing:border-box"></div>
<div class="b" style="left:612px;top:450px;width:64px;height:20px;background:#292a2b;border:1px solid #4e4f53;box-sizing:border-box;"></div>
<div class="b" style="left:617px;top:455px;width:40px;height:13px;overflow:hidden"><div class="t" style="left:0;top:0;color:#d6d6d6">0.350</div></div>
<div class="b" style="left:661px;top:457px"><svg class="dg" width="10" height="9" viewBox="0 0 10 9"><path d="M3.7 0H9.2V5.2Z M0.7 2.8V8.1H6.1Z" fill="#9a9a9a"/></svg></div>
<div class="t r" style="left:306px;width:300px;top:455px;color:#c6c7cb;">Softness</div>
<div class="b" style="left:683px;top:458px;width:193px;height:5px;background:#1f1f20;border-radius:3px;box-shadow:0 0 1px 0.5px rgba(30,30,32,0.6)"></div>
<div class="b" style="left:746px;top:454px;width:11px;height:13px;background:linear-gradient(#c0c0c0,#888888);border:1px solid #2e2f32;border-radius:3px;box-sizing:border-box"></div>
<div class="b" style="left:516px;top:499px;width:370px;height:549px;border:1px solid #37383a;border-radius:2px;box-sizing:border-box"></div>
<div class="t" style="left:525px;top:490px;color:#ececec;">Lens Flares</div>
<div class="t r" style="left:336px;width:300px;top:517px;color:#ececec;">Enabled</div>
<div class="b" style="left:643px;top:516px;width:12px;height:12px;border:1px solid #808184;border-radius:2px;box-sizing:border-box;background:#3c3d40"></div>
<div class="t r" style="left:336px;width:300px;top:540px;color:#6b6c70;">Texture</div>
<div class="b" style="left:642px;top:535px;width:182px;height:20px;background:#37383a;border:1px solid #4a4b4f;box-sizing:border-box"></div>
<svg class="b" style="left:646px;top:537px" width="16" height="16"><rect width="16" height="16" fill="#000"/><circle cx="3" cy="2.5" r="1.3" fill="#777"/><circle cx="7" cy="2.5" r="1.3" fill="#ddd"/><circle cx="11" cy="2.5" r="1.3" fill="#999"/><circle cx="14" cy="2.5" r="1.3" fill="#eee"/><circle cx="4.5" cy="12" r="1.6" fill="#666"/><circle cx="11.5" cy="12" r="1.6" fill="#6a6a6a"/></svg>
<div class="t" style="left:667px;top:540px;color:#6b6c70;">lens_flares_default.dds</div>
<svg class="b" style="left:831px;top:538px" width="17" height="15" viewBox="0 0 17 15"><path d="M0.5 12.5V0.5H6L7.5 2.5H14.5V12.5Z" fill="none" stroke="#6a6b6e"/><rect x="2.5" y="4.5" width="12" height="8" fill="#5a5b5e" stroke="#6a6b6e"/><path d="M1 13.5H15.5V3" fill="none" stroke="#2a2b2e" stroke-opacity="0.7"/></svg>
<svg class="b" style="left:854px;top:536px" width="17" height="17" viewBox="0 0 17 17"><path d="M4 10.5H0.5V16.5H16.5V10.5H12.5" fill="none" stroke="#5c5d60"/><path d="M12.6 0.3L12.6 10.2L10.6 8.8L7.2 14.6L5 14.2L8.3 8L4.6 8Z" fill="#636467"/></svg>
<div class="b" style="left:642px;top:561px;width:64px;height:20px;background:#37383a;border:1px solid #4a4b4f;box-sizing:border-box;"></div>
<div class="b" style="left:647px;top:566px;width:40px;height:13px;overflow:hidden"><div class="t" style="left:0;top:0;color:#6b6c70">1.000</div></div>
<div class="b" style="left:691px;top:568px"><svg class="dg" width="10" height="9" viewBox="0 0 10 9"><path d="M3.7 0H9.2V5.2Z M0.7 2.8V8.1H6.1Z" fill="#8e8e8e"/></svg></div>
<div class="t r" style="left:336px;width:300px;top:566px;color:#6b6c70;">Intensity</div>
<div class="b" style="left:713px;top:569px;width:160px;height:5px;background:#1f1f20;border-radius:3px;box-shadow:0 0 1px 0.5px rgba(30,30,32,0.6)"></div>
<div class="b" style="left:787px;top:565px;width:11px;height:13px;background:linear-gradient(#c0c0c0,#888888);border:1px solid #2e2f32;border-radius:3px;box-sizing:border-box"></div>
<div class="b" style="left:642px;top:587px;width:64px;height:20px;background:#37383a;border:1px solid #4a4b4f;box-sizing:border-box;"></div>
<div class="b" style="left:647px;top:592px;width:40px;height:13px;overflow:hidden"><div class="t" style="left:0;top:0;color:#6b6c70">1.000</div></div>
<div class="b" style="left:691px;top:594px"><svg class="dg" width="10" height="9" viewBox="0 0 10 9"><path d="M3.7 0H9.2V5.2Z M0.7 2.8V8.1H6.1Z" fill="#8e8e8e"/></svg></div>
<div class="t r" style="left:336px;width:300px;top:592px;color:#6b6c70;">Occlusion Fade</div>
<div class="b" style="left:713px;top:595px;width:160px;height:5px;background:#1f1f20;border-radius:3px;box-shadow:0 0 1px 0.5px rgba(30,30,32,0.6)"></div>
<div class="b" style="left:861px;top:591px;width:11px;height:13px;background:linear-gradient(#c0c0c0,#888888);border:1px solid #2e2f32;border-radius:3px;box-sizing:border-box"></div>
<div class="b" style="left:642px;top:613px;width:64px;height:20px;background:#37383a;border:1px solid #4a4b4f;box-sizing:border-box;"></div>
<div class="b" style="left:647px;top:618px;width:40px;height:13px;overflow:hidden"><div class="t" style="left:0;top:0;color:#6b6c70">0.200</div></div>
<div class="b" style="left:691px;top:620px"><svg class="dg" width="10" height="9" viewBox="0 0 10 9"><path d="M3.7 0H9.2V5.2Z M0.7 2.8V8.1H6.1Z" fill="#8e8e8e"/></svg></div>
<div class="t r" style="left:336px;width:300px;top:618px;color:#6b6c70;letter-spacing:-0.3px">Occlusion Fade Border</div>
<div class="b" style="left:713px;top:621px;width:160px;height:5px;background:#1f1f20;border-radius:3px;box-shadow:0 0 1px 0.5px rgba(30,30,32,0.6)"></div>
<div class="b" style="left:743px;top:617px;width:11px;height:13px;background:linear-gradient(#c0c0c0,#888888);border:1px solid #2e2f32;border-radius:3px;box-sizing:border-box"></div>
<div class="t r" style="left:336px;width:300px;top:644px;color:#6b6c70;">Position Offset</div>
<div class="b" style="left:642px;top:639px;width:73px;height:20px;background:#37383a;border:1px solid #4a4b4f;box-sizing:border-box;"></div>
<div class="b" style="left:647px;top:644px;width:49px;height:13px;overflow:hidden"><div class="t" style="left:0;top:0;color:#6b6c70">0.000</div></div>
<div class="b" style="left:700px;top:646px"><svg class="dg" width="10" height="9" viewBox="0 0 10 9"><path d="M3.7 0H9.2V5.2Z M0.7 2.8V8.1H6.1Z" fill="#8e8e8e"/></svg></div>
<div class="b" style="left:721px;top:639px;width:73px;height:20px;background:#37383a;border:1px solid #4a4b4f;box-sizing:border-box;"></div>
<div class="b" style="left:726px;top:644px;width:49px;height:13px;overflow:hidden"><div class="t" style="left:0;top:0;color:#6b6c70">0.000</div></div>
<div class="b" style="left:779px;top:646px"><svg class="dg" width="10" height="9" viewBox="0 0 10 9"><path d="M3.7 0H9.2V5.2Z M0.7 2.8V8.1H6.1Z" fill="#8e8e8e"/></svg></div>
<div class="b" style="left:800px;top:639px;width:73px;height:20px;background:#37383a;border:1px solid #4a4b4f;box-sizing:border-box;"></div>
<div class="b" style="left:805px;top:644px;width:49px;height:13px;overflow:hidden"><div class="t" style="left:0;top:0;color:#6b6c70">0.000</div></div>
<div class="b" style="left:858px;top:646px"><svg class="dg" width="10" height="9" viewBox="0 0 10 9"><path d="M3.7 0H9.2V5.2Z M0.7 2.8V8.1H6.1Z" fill="#8e8e8e"/></svg></div>
<div class="t r" style="left:336px;width:300px;top:667px;color:#6b6c70;">Use Light Color</div>
<div class="b" style="left:643px;top:667px;width:12px;height:12px;border:1px solid #656669;border-radius:2px;box-sizing:border-box;background:#3c3d40"></div>
<div class="b" style="left:645px;top:669px;width:8px;height:8px;background:#606164;box-shadow:inset 0 0 0 1px #505154"></div>
<div class="b" style="left:529px;top:685px;width:344px;height:1px;background:#36373a"></div>
<svg class="b" style="left:799px;top:696px" width="12" height="11"><path d="M5 0.5H7V4.5H11.5V6.5H7V10.5H5V6.5H0.5V4.5H5Z" fill="#5e5f62" stroke="#4f5053" stroke-width="0.6"/></svg>
<div class="b" style="left:827px;top:700px;width:12px;height:3px;background:#5e5f62"></div>
<svg class="b" style="left:852px;top:696px" width="16" height="11"><circle cx="4" cy="5.5" r="3.3" fill="#58595c" stroke="#4c4d50" stroke-width="0.8"/><circle cx="11.5" cy="5.5" r="3.3" fill="#58595c" stroke="#4c4d50" stroke-width="0.8"/></svg>
<div class="b" style="left:529px;top:718px;width:344px;height:112px;background:#292a2b;border:1px solid #4a4b4f;border-radius:3px;box-sizing:border-box"></div>
<div class="t" style="left:534px;top:723px;color:#8e8f92;">flare_0</div>
<div class="t" style="left:534px;top:740px;color:#8e8f92;">flare_1</div>
<div class="t" style="left:534px;top:757px;color:#8e8f92;">flare_2</div>
<div class="t" style="left:534px;top:774px;color:#8e8f92;">flare_3</div>
<div class="t" style="left:534px;top:791px;color:#8e8f92;">flare_4</div>
<div class="t" style="left:534px;top:808px;color:#8e8f92;">flare_5</div>
<div class="b" style="left:859px;top:723px;width:10px;height:95px;background:#58595d;border-radius:3px"></div>
<div class="t r" style="left:296px;width:300px;top:841px;color:#6b6c70;">Color</div>
<div class="b" style="left:602px;top:837px;width:271px;height:19px;background:#4f5053;border:1px solid #45464a;border-radius:2px;box-sizing:border-box"></div>
<div class="b" style="left:729px;top:846px;width:17px;height:1px;background:#6a6b6e"></div>
<div class="b" style="left:602px;top:862px;width:64px;height:20px;background:#37383a;border:1px solid #4a4b4f;box-sizing:border-box;"></div>
<div class="b" style="left:607px;top:867px;width:40px;height:13px;overflow:hidden"><div class="t" style="left:0;top:0;color:#6b6c70">&mdash;</div></div>
<div class="b" style="left:651px;top:869px"><svg class="dg" width="10" height="9" viewBox="0 0 10 9"><path d="M3.7 0H9.2V5.2Z M0.7 2.8V8.1H6.1Z" fill="#8e8e8e"/></svg></div>
<div class="t r" style="left:296px;width:300px;top:867px;color:#6b6c70;">Size</div>
<div class="b" style="left:673px;top:870px;width:200px;height:5px;background:#1f1f20;border-radius:3px;box-shadow:0 0 1px 0.5px rgba(30,30,32,0.6)"></div>
<div class="b" style="left:602px;top:888px;width:64px;height:20px;background:#37383a;border:1px solid #4a4b4f;box-sizing:border-box;"></div>
<div class="b" style="left:607px;top:893px;width:40px;height:13px;overflow:hidden"><div class="t" style="left:0;top:0;color:#6b6c70">&mdash;</div></div>
<div class="b" style="left:651px;top:895px"><svg class="dg" width="10" height="9" viewBox="0 0 10 9"><path d="M3.7 0H9.2V5.2Z M0.7 2.8V8.1H6.1Z" fill="#8e8e8e"/></svg></div>
<div class="t r" style="left:296px;width:300px;top:893px;color:#6b6c70;">Intensity</div>
<div class="b" style="left:673px;top:896px;width:200px;height:5px;background:#1f1f20;border-radius:3px;box-shadow:0 0 1px 0.5px rgba(30,30,32,0.6)"></div>
<div class="b" style="left:602px;top:914px;width:64px;height:20px;background:#37383a;border:1px solid #4a4b4f;box-sizing:border-box;"></div>
<div class="b" style="left:607px;top:919px;width:40px;height:13px;overflow:hidden"><div class="t" style="left:0;top:0;color:#6b6c70">&mdash;</div></div>
<div class="b" style="left:651px;top:921px"><svg class="dg" width="10" height="9" viewBox="0 0 10 9"><path d="M3.7 0H9.2V5.2Z M0.7 2.8V8.1H6.1Z" fill="#8e8e8e"/></svg></div>
<div class="t r" style="left:296px;width:300px;top:919px;color:#6b6c70;">Offset</div>
<div class="b" style="left:673px;top:922px;width:200px;height:5px;background:#1f1f20;border-radius:3px;box-shadow:0 0 1px 0.5px rgba(30,30,32,0.6)"></div>
<div class="b" style="left:602px;top:940px;width:64px;height:20px;background:#37383a;border:1px solid #4a4b4f;box-sizing:border-box;"></div>
<div class="b" style="left:607px;top:945px;width:40px;height:13px;overflow:hidden"><div class="t" style="left:0;top:0;color:#6b6c70">&mdash;</div></div>
<div class="b" style="left:651px;top:947px"><svg class="dg" width="10" height="9" viewBox="0 0 10 9"><path d="M3.7 0H9.2V5.2Z M0.7 2.8V8.1H6.1Z" fill="#8e8e8e"/></svg></div>
<div class="t r" style="left:296px;width:300px;top:945px;color:#6b6c70;">Offset Scale</div>
<div class="b" style="left:673px;top:948px;width:200px;height:5px;background:#1f1f20;border-radius:3px;box-shadow:0 0 1px 0.5px rgba(30,30,32,0.6)"></div>
<div class="b" style="left:602px;top:966px;width:97px;height:20px;background:#37383a;border:1px solid #4a4b4f;box-sizing:border-box;"></div>
<div class="b" style="left:607px;top:971px;width:73px;height:13px;overflow:hidden"><div class="t" style="left:0;top:0;color:#6b6c70">&mdash;</div></div>
<div class="b" style="left:684px;top:973px"><svg class="dg" width="10" height="9" viewBox="0 0 10 9"><path d="M3.7 0H9.2V5.2Z M0.7 2.8V8.1H6.1Z" fill="#8e8e8e"/></svg></div>
<div class="t r" style="left:296px;width:300px;top:971px;color:#6b6c70;">Upper Right U</div>
<div class="b" style="left:777px;top:966px;width:96px;height:20px;background:#37383a;border:1px solid #4a4b4f;box-sizing:border-box;"></div>
<div class="b" style="left:782px;top:971px;width:72px;height:13px;overflow:hidden"><div class="t" style="left:0;top:0;color:#6b6c70">&mdash;</div></div>
<div class="b" style="left:858px;top:973px"><svg class="dg" width="10" height="9" viewBox="0 0 10 9"><path d="M3.7 0H9.2V5.2Z M0.7 2.8V8.1H6.1Z" fill="#8e8e8e"/></svg></div>
<div class="t r" style="left:471px;width:300px;top:971px;color:#6b6c70;">Upper Right V</div>
<div class="b" style="left:602px;top:992px;width:97px;height:20px;background:#37383a;border:1px solid #4a4b4f;box-sizing:border-box;"></div>
<div class="b" style="left:607px;top:997px;width:73px;height:13px;overflow:hidden"><div class="t" style="left:0;top:0;color:#6b6c70">&mdash;</div></div>
<div class="b" style="left:684px;top:999px"><svg class="dg" width="10" height="9" viewBox="0 0 10 9"><path d="M3.7 0H9.2V5.2Z M0.7 2.8V8.1H6.1Z" fill="#8e8e8e"/></svg></div>
<div class="t r" style="left:296px;width:300px;top:997px;color:#6b6c70;">Lower Left U</div>
<div class="b" style="left:777px;top:992px;width:96px;height:20px;background:#37383a;border:1px solid #4a4b4f;box-sizing:border-box;"></div>
<div class="b" style="left:782px;top:997px;width:72px;height:13px;overflow:hidden"><div class="t" style="left:0;top:0;color:#6b6c70">&mdash;</div></div>
<div class="b" style="left:858px;top:999px"><svg class="dg" width="10" height="9" viewBox="0 0 10 9"><path d="M3.7 0H9.2V5.2Z M0.7 2.8V8.1H6.1Z" fill="#8e8e8e"/></svg></div>
<div class="t r" style="left:471px;width:300px;top:997px;color:#6b6c70;">Lower Left V</div>
<div class="t r" style="left:296px;width:300px;top:1020px;color:#6b6c70;">Rotate</div>
<div class="b" style="left:603px;top:1019px;width:12px;height:12px;border:1px solid #656669;border-radius:2px;box-sizing:border-box;background:#3c3d40"></div>
<div class="b" style="left:605px;top:1023px;width:8px;height:4px;background:#b0b0b0"></div>
</body></html>
